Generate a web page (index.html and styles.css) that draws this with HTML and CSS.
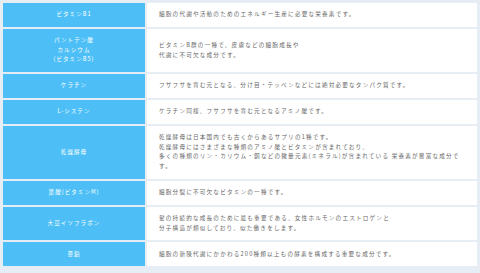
FILE: index.html
```html
<!DOCTYPE html>
<html lang="ja">
<head>
<meta charset="utf-8">
<link rel="stylesheet" href="styles.css">
</head>
<body>
<table class="ingredients">
  <colgroup><col class="col-name"><col class="col-desc"></colgroup>
  <tbody>
    <tr><th>ビタミンB1</th><td>細胞の代謝や活動のためのエネルギー生産に必要な栄養素です。</td></tr>
    <tr><th>パントテン酸<br>カルシウム<br>(ビタミンB5)</th><td>ビタミンB群の一種で、皮膚などの細胞成長や<br>代謝に不可欠な成分です。</td></tr>
    <tr><th>ケラチン</th><td>フサフサを育む元となる、分け目・テッペンなどには絶対必要なタンパク質です。</td></tr>
    <tr><th>L-システン</th><td>ケラチン同様、フサフサを育む元となるアミノ酸です。</td></tr>
    <tr><th>乾燥酵母</th><td>乾燥酵母は日本国内でも古くからあるサプリの1種です。<br>乾燥酵母にはさまざまな種類のアミノ酸とビタミンが含まれており、<br>多くの種類のリン・カリウム・銅などの微量元素(ミネラル)が含まれている 栄養素が豊富な成分です。</td></tr>
    <tr><th>葉酸(ビタミンM)</th><td>細胞分裂に不可欠なビタミンの一種です。</td></tr>
    <tr><th>大豆イソフラボン</th><td>髪の持続的な成長のために最も重要である、女性ホルモンのエストロゲンと<br>分子構造が類似しており、似た働きをします。</td></tr>
    <tr><th>亜鉛</th><td>細胞の新陳代謝にかかわる200種類以上もの酵素を構成する重要な成分です。</td></tr>
  </tbody>
</table>
</body>
</html>
```
FILE: styles.css
```css
html, body {
  margin: 0;
  padding: 0;
  background: #e6edf5;
}
body {
  padding: 1px;
  width: 478px;
  font-family: "Noto Sans CJK JP", "Noto Sans", sans-serif;
}
.ingredients {
  width: 100%;
  table-layout: fixed;
  border-collapse: separate;
  border-spacing: 2px;
}
.col-name { width: 142px; }
.ingredients th,
.ingredients td {
  padding: 7.2px 12px;
  font-size: 5.6px;
  line-height: 9.6px;
  vertical-align: middle;
}
.ingredients th {
  background: #4dbff6;
  color: #ffffff;
  font-weight: normal;
  text-align: center;
  letter-spacing: 1px;
}
.ingredients td {
  background: #ffffff;
  color: #666666;
  text-align: left;
  letter-spacing: 1.2px;
}
```
